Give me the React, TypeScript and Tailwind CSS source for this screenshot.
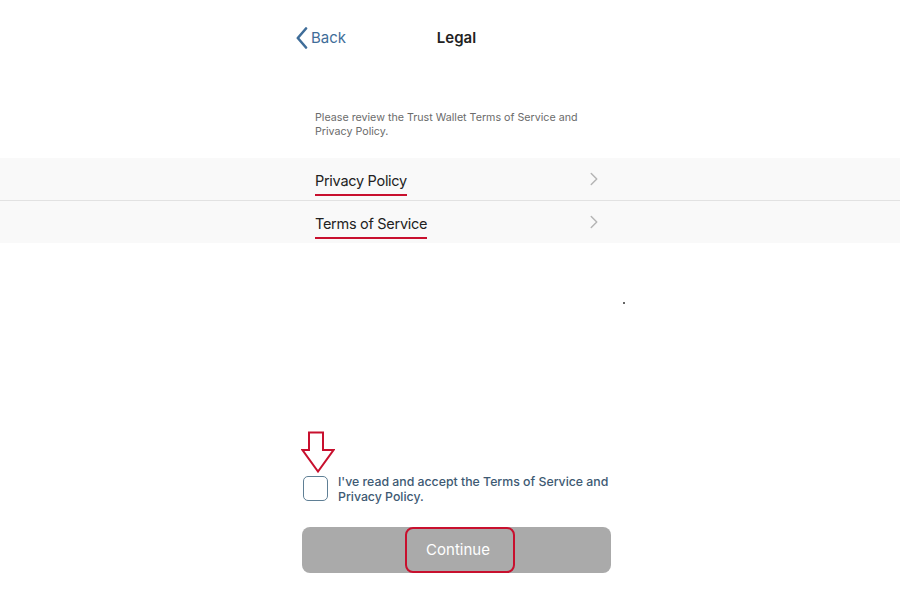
import { ChevronRight } from "lucide-react";

function Row({ label }: { label: string }) {
  return (
    <div className="h-[42px] bg-[#f9f9f9] flex">
      <div className="ml-[302px] w-[309px] flex items-center pl-[13px] pr-[6px]">
        <span className="mt-[10px] pb-[4px] border-b-2 border-[#c8102e] text-[14.5px] leading-[18px] tracking-[-0.02em] text-[#222]">
          {label}
        </span>
        <ChevronRight className="ml-auto w-[22px] h-[22px] text-[#b5b5b5]" strokeWidth={1.6} />
      </div>
    </div>
  );
}

export default function App() {
  return (
    <div
      className="relative w-[900px] h-[600px] bg-white flex flex-col overflow-hidden"
      style={{ fontFamily: "Inter, 'Noto Sans', sans-serif" }}
    >
      {/* header */}
      <div className="ml-[302px] w-[309px] pt-[26px] flex items-center h-[50px] relative">
        <div className="flex items-center -ml-[6px] text-[#3f6d99]">
          <svg width="12" height="22" viewBox="0 0 12 22" className="mt-[-1px]">
            <polyline
              points="10,1.5 1.8,11 10,20.5"
              fill="none"
              stroke="currentColor"
              strokeWidth="2.6"
              strokeLinecap="round"
              strokeLinejoin="round"
            />
          </svg>
          <span className="ml-[3px] text-[15px] leading-[24px]">Back</span>
        </div>
        <div className="absolute left-0 right-0 top-[26px] text-center text-[15px] leading-[24px] font-semibold text-[#222] pointer-events-none">
          Legal
        </div>
      </div>

      <p className="ml-[302px] w-[309px] pl-[13px] pr-[8px] mt-[61px] text-[10.7px] leading-[14px] text-[#6b6b6b]">
        Please review the Trust Wallet Terms of Service and Privacy Policy.
      </p>

      <div className="mt-[19px] flex flex-col">
        <Row label="Privacy Policy" />
        <div className="h-px bg-[#e2e2e2]" />
        <Row label="Terms of Service" />
      </div>

      <div className="absolute left-[623px] top-[302px] w-[2px] h-[2px] rounded-full bg-[#333]" />

      {/* bottom */}
      <div className="mt-auto ml-[300px] w-[313px] pb-[27px] flex flex-col">
        <svg width="34" height="42" viewBox="0 0 34 42" className="ml-[1px]">
          <polygon
            points="8,1.5 22,1.5 22,19 32.5,19 17,40.5 1.5,19 8,19"
            fill="none"
            stroke="#c8102e"
            strokeWidth="2"
            strokeLinejoin="miter"
          />
        </svg>
        <div className="flex items-start mt-[3px]">
          <div className="ml-[3px] w-[25px] h-[25px] rounded-[5px] border-[1.5px] border-[#5f7f95] shrink-0" />
          <p className="ml-[10px] mt-[-2px] text-[12.3px] leading-[15px] font-medium text-[#3e5a73]">
            I've read and accept the Terms of Service and Privacy Policy.
          </p>
        </div>
        <div className="mt-[23px] ml-[2px] w-[309px] h-[46px] rounded-[8px] bg-[#aaaaaa] flex justify-center">
          <div className="ml-[6px] w-[110px] h-[46px] rounded-[8px] border-2 border-[#c8102e] flex items-center justify-center text-white text-[15px]">
            <span className="ml-[-3px]">Continue</span>
          </div>
        </div>
      </div>
    </div>
  );
}
